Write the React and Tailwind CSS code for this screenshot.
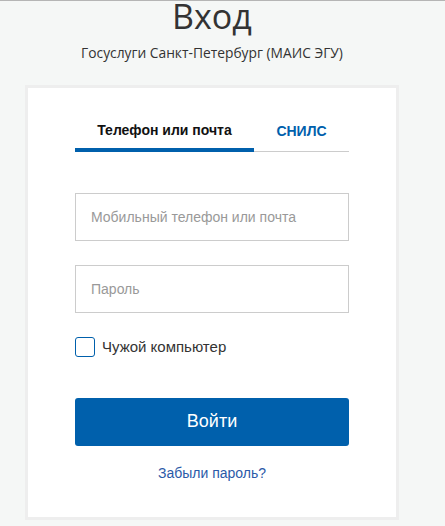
export default function App() {
  return (
    <main className="min-h-[526px] bg-[#f5f7f6] border-t border-[#b5b5b5] font-['Liberation_Sans',Arial,sans-serif]">
      <div className="w-[424px] flex flex-col items-center">
        <h1 className="h-[30px] text-[34px] leading-[30px] text-[#333] font-['Open_Sans',sans-serif]">
          Вход
        </h1>
        <p className="mt-[13px] text-[13.8px] leading-[18px] text-[#333] font-['Open_Sans',sans-serif]">
          Госуслуги Санкт-Петербург (МАИС ЭГУ)
        </p>

        <section className="mt-[23px] w-[374px] border-[3px] border-[#eeeeee] bg-white px-[47px] pt-[23px] pb-[34px]">
          <div className="flex border-b border-[#cccccc]">
            <button className="w-[179px] h-[41px] -mb-px border-b-4 border-[#0060ac] pt-[2px] text-[14px] font-bold text-[#111]">
              Телефон или почта
            </button>
            <button className="flex-1 h-[40px] pt-[2px] pb-[2px] text-[14px] font-bold text-[#0060ac]">
              СНИЛС
            </button>
          </div>

          <div className="mt-[41px] h-[48px] border border-[#cccccc] flex items-center px-[15px] text-[14px] text-[#999]">
            Мобильный телефон или почта
          </div>
          <div className="mt-[24px] h-[48px] border border-[#cccccc] flex items-center px-[15px] text-[14px] text-[#999]">
            Пароль
          </div>

          <label className="mt-[23px] flex items-center gap-[7px]">
            <span className="w-[20px] h-[20px] rounded-[3px] border border-[#0060ac] bg-white" />
            <span className="text-[15px] text-[#333]">Чужой компьютер</span>
          </label>

          <button className="mt-[39px] w-full h-[48px] rounded-[3px] bg-[#0060ac] text-white text-[18px]">
            Войти
          </button>

          <div className="mt-[17px] text-center text-[14px] leading-[20px] text-[#2b5aa8]">
            Забыли пароль?
          </div>
        </section>
      </div>
    </main>
  );
}
